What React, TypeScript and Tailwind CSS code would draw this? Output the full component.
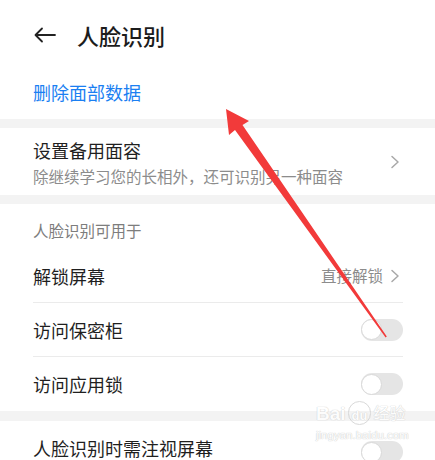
import React from "react";

const font = { fontFamily: '"Noto Sans CJK SC", "Noto Sans", sans-serif' };

// Simple grey switch in the off state
const Toggle = () => (
    <div className="w-[42px] h-[22px] rounded-full bg-[#e5e5e5] flex items-center">
        <div className="w-[21px] h-[21px] rounded-full bg-white border border-[#d9d9d9]" />
    </div>
);

const Chevron = () => (
    <svg width="10" height="14" viewBox="0 0 10 14" fill="none">
        <path d="M2 1.5 L8 7 L2 12.5" stroke="#a8a8a8" strokeWidth="1.5" strokeLinecap="round" strokeLinejoin="round" />
    </svg>
);

const Row = ({label, right, last}: { label: string; right: React.ReactNode; last?: boolean }) => (
    <div className={`h-[54px] flex items-center justify-between ${last ? "" : "border-b border-[#ebebeb]"}`}>
        <span className="text-[18px] leading-6 text-[#1f1f1f]">{label}</span>
        {right}
    </div>
);

export default function App() {
    return (
        <div className="relative w-[435px] h-[460px] overflow-hidden bg-white" style={font}>
            {/* header */}
            <div className="h-[70px] flex items-center pl-[34px]">
                <svg width="22" height="16" viewBox="0 0 22 16" fill="none">
                    <path d="M21 8 H2 M8 1.5 L1.5 8 L8 14.5" stroke="#222" strokeWidth="1.8" strokeLinecap="round" strokeLinejoin="round" />
                </svg>
                <span className="ml-[21px] text-[22px] leading-7 font-medium text-[#1c1c1c]">人脸识别</span>
            </div>

            <div className="h-[49px] pt-[10px] px-[33px]">
                <span className="text-[18px] leading-6 text-[#1b7ff2]">删除面部数据</span>
            </div>

            <div className="h-[9px] bg-[#f3f3f3]" />

            {/* backup face */}
            <div className="h-[67px] px-[33px] pr-[35px] flex items-center justify-between">
                <div className="flex flex-col gap-1 mt-[1px]">
                    <span className="text-[18px] leading-6 text-[#1f1f1f]">设置备用面容</span>
                    <span className="text-[15.5px] leading-5 text-[#8c8c8c]">除继续学习您的长相外，还可识别另一种面容</span>
                </div>
                <Chevron />
            </div>

            <div className="h-[9px] bg-[#f3f3f3]" />

            {/* usage list */}
            <div className="px-[33px] pr-[32px]">
                <div className="h-[45px] pt-[14px]">
                    <span className="text-[15.5px] leading-5 text-[#7d7d7d]">人脸识别可用于</span>
                </div>
                <Row
                    label="解锁屏幕"
                    right={
                        <div className="flex items-center gap-[7px] pr-[3px]">
                            <span className="text-[15.5px] text-[#8c8c8c]">直接解锁</span>
                            <Chevron />
                        </div>
                    }
                />
                <Row label="访问保密柜" right={<Toggle />} />
                <Row label="访问应用锁" right={<Toggle />} last />
            </div>

            <div className="h-[10px] bg-[#f3f3f3]" />

            <div className="px-[33px] pr-[32px]">
                <div className="h-[37px] flex items-end justify-between">
                    <span className="text-[18px] leading-5 text-[#1f1f1f]">人脸识别时需注视屏幕</span>
                    <div className="-mb-[5px]">
                        <Toggle />
                    </div>
                </div>
            </div>

            {/* baidu jingyan watermark */}
            <div className="absolute left-[316px] top-[401px] flex flex-col items-start pointer-events-none opacity-80">
                <div className="flex items-end gap-[2px] text-white font-bold [text-shadow:0_0_1px_#c8c8c8,0_0_1px_#c8c8c8]" style={{fontFamily: '"Liberation Sans", "Noto Sans CJK SC", sans-serif'}}>
                    <span className="text-[19px] leading-6">Bai</span>
                    <span className="text-[13px] leading-4 px-[3px] pt-[6px] rounded-full border border-[#d0d0d0] mb-[1px]">du</span>
                    <span className="text-[16px] leading-6 font-normal">经验</span>
                </div>
                <span className="text-[11.5px] leading-3 mt-[3px] text-white [text-shadow:0_0_1px_#c0c0c0,0_0_1px_#c0c0c0]" style={{fontFamily: '"Liberation Sans", sans-serif'}}>jingyan.baidu.com</span>
            </div>

            {/* red annotation arrow */}
            <svg className="absolute left-0 top-0 pointer-events-none" width="435" height="460" viewBox="0 0 435 460">
                <polygon
                    points="226,109 249,121 242.5,125 386.8,336.6 385.6,337.4 235,130 229,135"
                    fill="#f23a3a"
                />
            </svg>
        </div>
    );
}
